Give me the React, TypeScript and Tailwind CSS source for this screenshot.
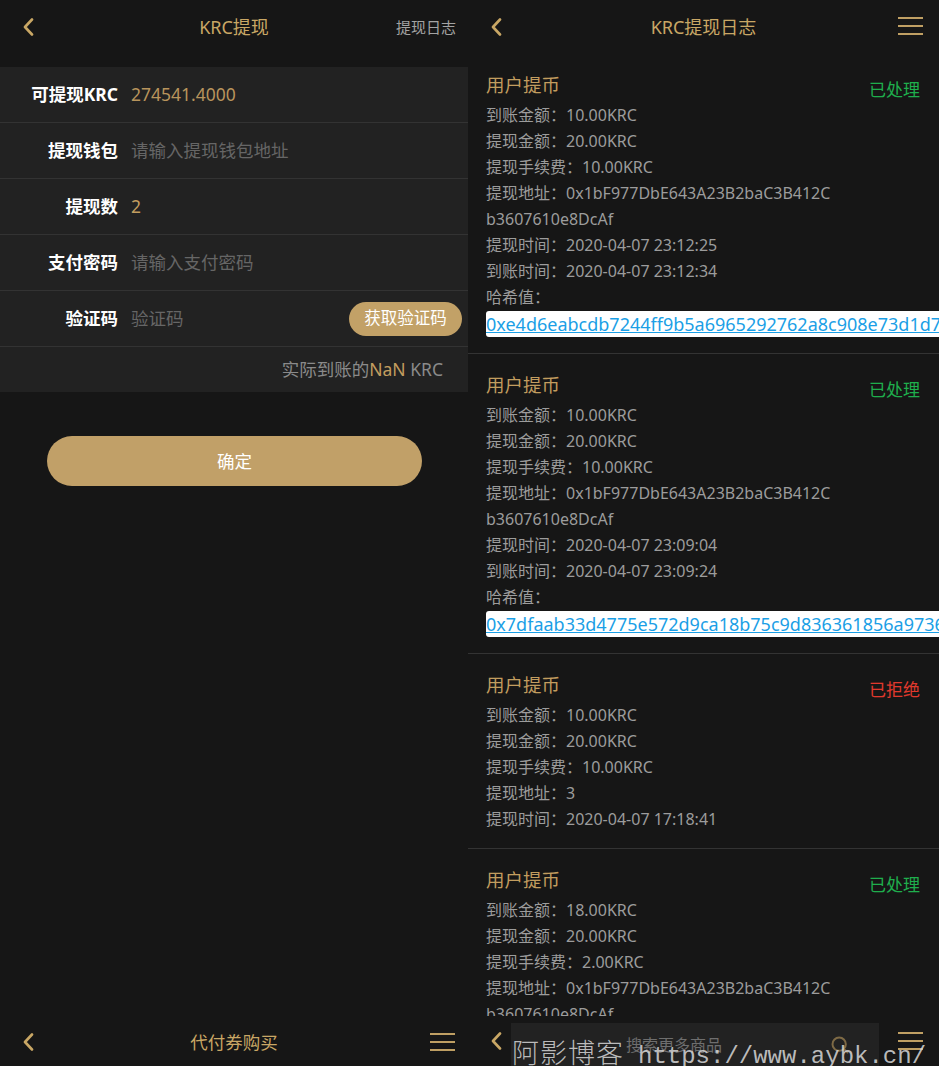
import {Search} from "lucide-react";

const FONT = {fontFamily: '"Noto Sans", "Noto Sans CJK SC", sans-serif'};

type Record = {
  status: "done" | "rejected";
  received: string;
  amount: string;
  fee: string;
  address: string[];
  createdAt: string;
  paidAt?: string;
  hash?: string;
};

const records: Record[] = [
  {
    status: "done",
    received: "10.00KRC",
    amount: "20.00KRC",
    fee: "10.00KRC",
    address: ["0x1bF977DbE643A23B2baC3B412C", "b3607610e8DcAf"],
    createdAt: "2020-04-07 23:12:25",
    paidAt: "2020-04-07 23:12:34",
    hash: "0xe4d6eabcdb7244ff9b5a6965292762a8c908e73d1d7a3c",
  },
  {
    status: "done",
    received: "10.00KRC",
    amount: "20.00KRC",
    fee: "10.00KRC",
    address: ["0x1bF977DbE643A23B2baC3B412C", "b3607610e8DcAf"],
    createdAt: "2020-04-07 23:09:04",
    paidAt: "2020-04-07 23:09:24",
    hash: "0x7dfaab33d4775e572d9ca18b75c9d836361856a9736e",
  },
  {
    status: "rejected",
    received: "10.00KRC",
    amount: "20.00KRC",
    fee: "10.00KRC",
    address: ["3"],
    createdAt: "2020-04-07 17:18:41",
  },
  {
    status: "done",
    received: "18.00KRC",
    amount: "20.00KRC",
    fee: "2.00KRC",
    address: ["0x1bF977DbE643A23B2baC3B412C", "b3607610e8DcAf"],
    createdAt: "2020-04-07 23:02:11",
    paidAt: "2020-04-07 23:02:30",
  },
];

const Back = () => (
  <svg width="12" height="18" viewBox="0 0 12 18" fill="none">
    <polyline points="10,1.5 3,9 10,16.5" stroke="#c9a765" strokeWidth="2.6" strokeLinecap="round" strokeLinejoin="round" />
  </svg>
);

const Burger = () => (
  <div className="flex flex-col gap-[6px] w-[25px]">
    <div className="h-[2px] bg-[#bf9f63]" />
    <div className="h-[2px] bg-[#bf9f63]" />
    <div className="h-[2px] bg-[#bf9f63]" />
  </div>
);

const FormRow = ({label, children}: { label: string; children: React.ReactNode }) => (
  <div className="flex items-center h-[56px] border-b border-[#333333]">
    <div className="w-[118px] text-right text-[17.5px] font-bold text-white shrink-0 whitespace-nowrap">{label}</div>
    <div className="flex-1 flex items-center ml-[13px] text-[17.5px]">{children}</div>
  </div>
);

const WithdrawPanel = () => (
  <div className="w-[468px] shrink-0 flex flex-col bg-[#161616]">
    <div className="relative flex items-center justify-center h-[54px]">
      <div className="absolute left-[22px] top-[18px]"><Back /></div>
      <span className="text-[18px] text-[#c9a765]">KRC提现</span>
      <span className="absolute right-[12px] text-[15px] text-[#a3a3a3]">提现日志</span>
    </div>
    <div className="mt-[13px] bg-[#222222]">
      <FormRow label="可提现KRC"><span className="text-[#b8945c]">274541.4000</span></FormRow>
      <FormRow label="提现钱包"><span className="text-[#666666]">请输入提现钱包地址</span></FormRow>
      <FormRow label="提现数"><span className="text-[#c29d5f]">2</span></FormRow>
      <FormRow label="支付密码"><span className="text-[#666666]">请输入支付密码</span></FormRow>
      <FormRow label="验证码">
        <span className="flex-1 text-[#666666]">验证码</span>
        <button className="mr-[6px] w-[113px] h-[34px] rounded-full bg-[#c2a167] text-white text-[16.5px]">获取验证码</button>
      </FormRow>
      <div className="flex items-center justify-end h-[45px] pr-[25px] text-[17.5px] text-[#8a8a8a]">
        实际到账的<span className="text-[#c29d5f]">NaN</span>&nbsp;KRC
      </div>
    </div>
    <button className="mt-[44px] ml-[47px] w-[375px] h-[50px] rounded-full bg-[#c1a068] text-white text-[17.5px]">确定</button>
    <div className="flex-1" />
    <div className="relative flex items-center justify-center h-[48px]">
      <div className="absolute left-[22px] top-[15px]"><Back /></div>
      <span className="text-[17.5px] text-[#c9a765]">代付券购买</span>
      <div className="absolute right-[13px] top-[15px]"><Burger /></div>
    </div>
  </div>
);

const Line = ({children}: { children: React.ReactNode }) => (
  <div className="leading-[26px] text-[16px] text-[#9c9c9c] whitespace-nowrap">{children}</div>
);

const RecordItem = ({r}: { r: Record }) => (
  <div className="pt-[18px] pb-[16px] pl-[18px] border-b border-[#333333]">
    <div className="flex items-start justify-between h-[26px] mb-[4px]">
      <span className="leading-[26px] text-[18.5px] text-[#c29d5f]">用户提币</span>
      <span className={`mt-[5px] mr-[19px] leading-[26px] text-[17px] ${r.status === "done" ? "text-[#1fae4d]" : "text-[#e0392d]"}`}>
        {r.status === "done" ? "已处理" : "已拒绝"}
      </span>
    </div>
    <Line>到账金额：{r.received}</Line>
    <Line>提现金额：{r.amount}</Line>
    <Line>提现手续费：{r.fee}</Line>
    <Line>提现地址：{r.address[0]}</Line>
    {r.address.slice(1).map((a) => <Line key={a}>{a}</Line>)}
    <Line>提现时间：{r.createdAt}</Line>
    {r.paidAt && <Line>到账时间：{r.paidAt}</Line>}
    {r.hash && (
      <>
        <Line>哈希值：</Line>
        <div className="mt-[1px] h-[26px] bg-white rounded-l-[3px] whitespace-nowrap overflow-hidden">
          <a className="text-[18px] leading-[26px] text-[#1b9fe6] underline">{r.hash}</a>
        </div>
      </>
    )}
  </div>
);

const LogPanel = () => (
  <div className="relative flex-1 flex flex-col bg-[#161616] overflow-hidden">
    <div className="relative flex items-center justify-center h-[54px] shrink-0">
      <div className="absolute left-[22px] top-[18px]"><Back /></div>
      <span className="text-[18px] text-[#c9a765]">KRC提现日志</span>
      <div className="absolute right-[16px] top-[17px]"><Burger /></div>
    </div>
    <div className="flex-1 overflow-hidden">
      {records.map((r, i) => <RecordItem key={i} r={r} />)}
    </div>
    <div className="relative flex items-start h-[50px] shrink-0 bg-[#161616]">
      <div className="absolute left-[22px] top-[16px]"><Back /></div>
      <div className="ml-[43px] mt-[7px] w-[368px] h-[43px] bg-[#222222] flex items-center">
        <span className="flex-1 pl-[115px] text-[16px] text-[#6e6e6e]">搜索更多商品</span>
        <Search size={20} color="#7e6a45" strokeWidth={2.4} className="mr-[29px]" />
      </div>
      <div className="absolute right-[16px] top-[16px]"><Burger /></div>
      <div className="absolute left-[44px] top-[21px] flex items-baseline whitespace-nowrap text-[#d8d8d8]/85 leading-[30px]">
        <span className="text-[27px] font-light tracking-[1px]" style={{fontFamily: '"Noto Sans CJK SC", serif'}}>阿影博客</span>
        <span className="ml-[14px] text-[24px]" style={{fontFamily: '"Liberation Mono", monospace'}}>https://www.aybk.cn/</span>
      </div>
    </div>
  </div>
);

export default function App() {
  return (
    <div className="flex w-[939px] h-[1066px] overflow-hidden bg-[#161616]" style={FONT}>
      <WithdrawPanel />
      <LogPanel />
    </div>
  );
}
